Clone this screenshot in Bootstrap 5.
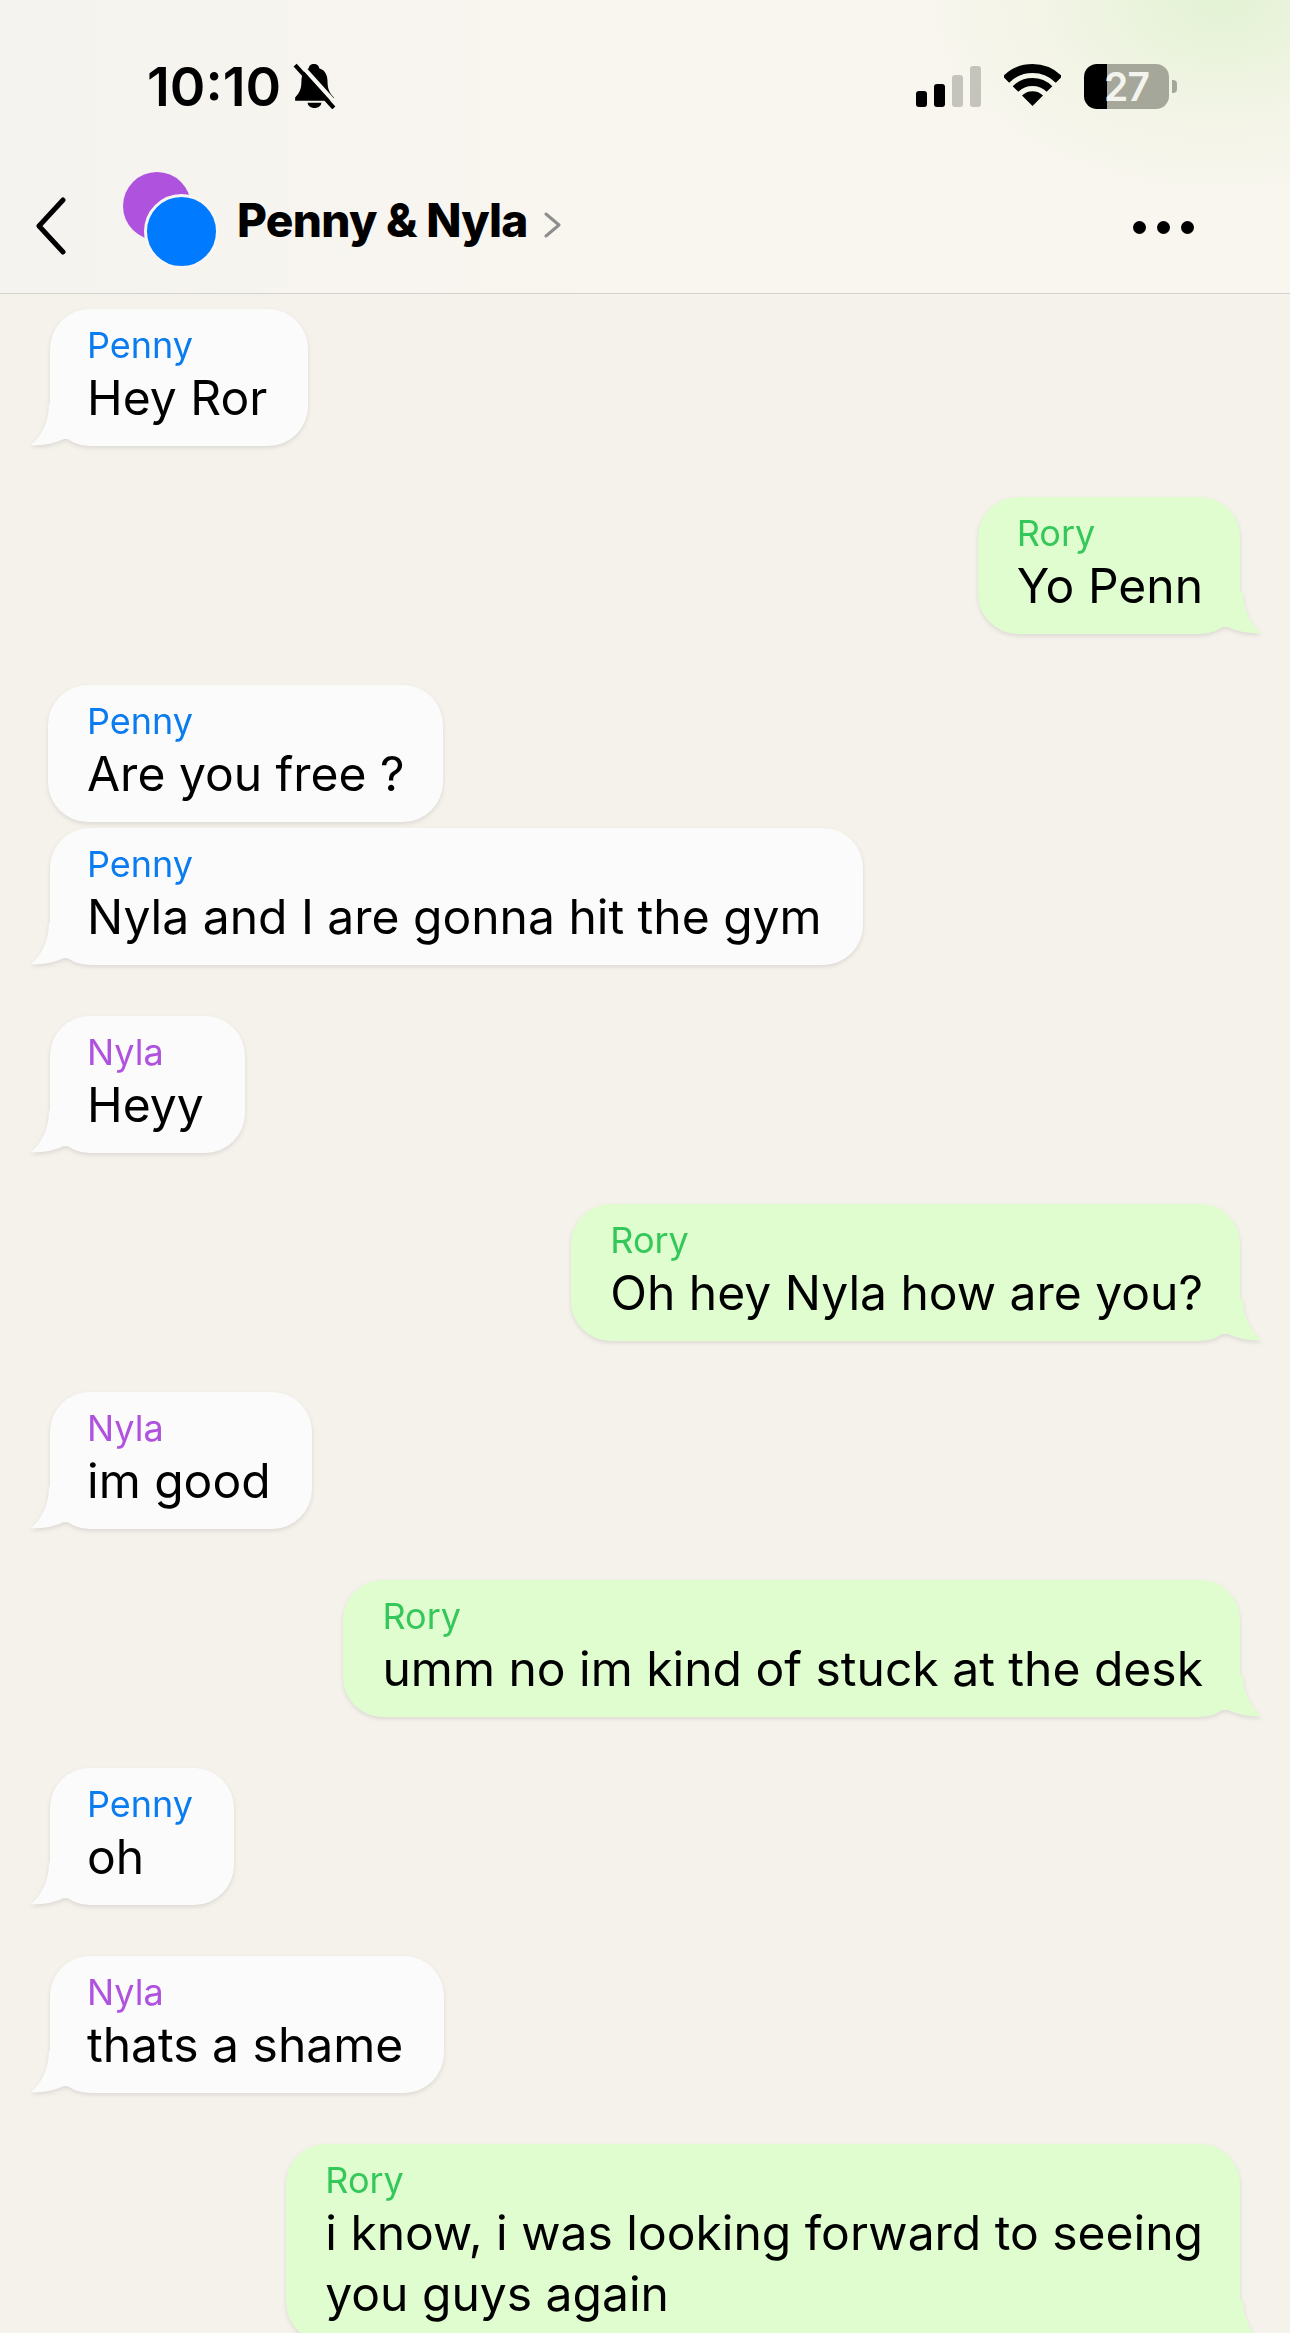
<!DOCTYPE html>
<html lang="en">
<head>
    <meta charset="UTF-8">
    <meta name="viewport" content="width=device-width, initial-scale=1.0">
    <title>Penny &amp; Nyla</title>
    <link href="https://cdn.jsdelivr.net/npm/bootstrap@5.3.0/dist/css/bootstrap.min.css" rel="stylesheet">
    <style>
        html, body { height: 2333px; overflow: hidden; }
        body { background: #f5f2ec; font-family: Inter, "Liberation Sans", sans-serif; color: #000; }

        .top-head {
            height: 294px;
            border-bottom: 1px solid #d4d2cd;
            background:
                radial-gradient(ellipse 320px 210px at 1220px 0, #e3f2d4 0%, rgba(240, 244, 226, .7) 55%, rgba(249, 246, 240, 0) 100%),
                linear-gradient(90deg, #f5f3ef 0%, #f9f6f0 45%);
        }
        .status-row { height: 148px; padding: 64px 113px 0 147px; }
        .clock { font-size: 54px; font-weight: 600; line-height: 46px; width: 146px; }
        .bell-icon { margin-top: -1px; }
        .sig-bar { width: 11px; border-radius: 3px; background: #000; }
        .sig-bar.off { background: #c5c4bc; }
        .sig-wrap { gap: 7px; height: 41px; margin-right: 23px; margin-top: 2px; }
        .wifi-icon { margin-right: 23px; }
        .batt {
            width: 85px; height: 45px; border-radius: 13px;
            background: linear-gradient(90deg, #000 0, #000 23px, #a5a79b 23px);
            color: #f4f4ee; font-size: 39px; font-weight: 600; line-height: 45px; letter-spacing: -1px;
        }
        .batt-nub { width: 5px; height: 13px; border-radius: 0 4px 4px 0; background: #a5a79b; margin-left: 3px; }

        .nav-row { padding: 10px 96px 0 35px; height: 145px; }
        .avatars { width: 94px; height: 96px; margin-left: 56px; margin-top: -11px; margin-right: 20px; position: relative; }
        .av-back { position: absolute; left: 0; top: 0; width: 68px; height: 68px; border-radius: 50%; background: #af52de; }
        .av-front { position: absolute; left: 21px; top: 22px; width: 75px; height: 75px; border-radius: 50%; background: #007aff; border: 3px solid #f8f6f2; }
        .convo-title { font-size: 46px; font-weight: 800; line-height: 54px; letter-spacing: -.7px; margin-top: -12px; }
        .title-chev { margin-top: -2px; }
        .dots { gap: 11px; margin-top: 3px; }
        .dots span { width: 13px; height: 13px; border-radius: 50%; background: #000; }

        .chat { padding: 15px 50px 0; }
        .msg-row { margin-bottom: 51px; }
        .msg-row.tight { margin-bottom: 6px; }
        .bubble {
            position: relative;
            padding: 14px 41px 18px 37px;
            border-radius: 40px;
            background: #fbfbfb;
            filter: drop-shadow(0 2px 2px rgba(0, 0, 0, .1));
        }
        .bubble.mine { background: #e0fdd0; padding-right: 37px; padding-left: 39px; }
        .bubble.no-tail { margin-left: -2px; padding-left: 39px; padding-right: 38px; }
        .who { font-size: 36px; line-height: 44px; }
        .who-penny { color: #0a7cf0; }
        .who-nyla { color: #af52de; }
        .who-rory { color: #34c759; }
        .said { font-size: 48px; line-height: 61px; white-space: nowrap; }
        .tail { position: absolute; bottom: 0; left: -19px; width: 50px; height: 50px; fill: #fbfbfb; }
        .mine .tail { left: auto; right: -21px; transform: scaleX(-1); fill: #e0fdd0; }
    </style>
</head>
<body>
    <header class="top-head">
        <div class="status-row d-flex justify-content-between">
            <div class="d-flex align-items-start">
                <div class="clock">10:10</div>
                <svg width="44" height="46" viewBox="0 0 42 44" class="bell-icon">
                    <path d="M20 1c3 0 5 2 5 4 6 2 8 7 8 13 0 7 2 11 6 15v3H2v-3c4-4 6-8 6-15 0-6 2-11 7-13 0-2 2-4 5-4z"/>
                    <path d="M14 38h13c0 3-3 5-6.500 5S14 41 14 38z"/>
                    <path d="M6 0l36 40" stroke="#f8f6f1" stroke-width="4" fill="none"/>
                    <path d="M2 2l37 41" stroke="#000" stroke-width="4" fill="none"/>
                </svg>
            </div>
            <div class="d-flex align-items-start">
                <div class="sig-wrap d-flex align-items-end">
                    <div class="sig-bar" style="height: 16px"></div>
                    <div class="sig-bar" style="height: 23px"></div>
                    <div class="sig-bar off" style="height: 32px"></div>
                    <div class="sig-bar off" style="height: 41px"></div>
                </div>
                <svg width="57" height="43" viewBox="0 0 57 43" class="wifi-icon flex-shrink-0">
                    <path d="M2 15.500A37.500 37.500 0 0 1 55 15.500" fill="none" stroke="#000" stroke-width="9"/>
                    <path d="M11.500 25A24 24 0 0 1 45.500 25" fill="none" stroke="#000" stroke-width="8"/>
                    <path d="M28.500 42L18 31.500A15 15 0 0 1 39 31.500Z"/>
                </svg>
                <div class="batt text-center">27</div>
                <div class="batt-nub align-self-start mt-3"></div>
            </div>
        </div>
        <div class="nav-row d-flex align-items-center">
            <svg width="32" height="58" viewBox="0 0 32 58">
                <path d="M28 3L4 29l24 26" fill="none" stroke="#000" stroke-width="5" stroke-linecap="round" stroke-linejoin="round"/>
            </svg>
            <div class="avatars">
                <div class="av-back"></div>
                <div class="av-front"></div>
            </div>
            <div class="convo-title">Penny &amp; Nyla</div>
            <svg width="18" height="26" viewBox="0 0 18 26" class="title-chev ms-3">
                <path d="M2 2l13 11L2 24" fill="none" stroke="#8e8e8e" stroke-width="3" stroke-linecap="round" stroke-linejoin="round"/>
            </svg>
            <div class="dots d-flex ms-auto">
                <span></span><span></span><span></span>
            </div>
        </div>
    </header>

    <main class="chat d-flex flex-column">
        <div class="msg-row d-flex justify-content-start">
            <div class="bubble">
                <svg class="tail" viewBox="0 0 50 50"><path d="M18 8C18 26 10 41 0 49C12 50 24 47 33 43L45 43L45 8Z"/></svg>
                <div class="who who-penny">Penny</div>
                <div class="said">Hey Ror</div>
            </div>
        </div>
        <div class="msg-row d-flex justify-content-end">
            <div class="bubble mine">
                <svg class="tail" viewBox="0 0 50 50"><path d="M18 8C18 26 10 41 0 49C12 50 24 47 33 43L45 43L45 8Z"/></svg>
                <div class="who who-rory">Rory</div>
                <div class="said">Yo Penn</div>
            </div>
        </div>
        <div class="msg-row tight d-flex justify-content-start">
            <div class="bubble no-tail">
                <div class="who who-penny">Penny</div>
                <div class="said">Are you free ?</div>
            </div>
        </div>
        <div class="msg-row d-flex justify-content-start">
            <div class="bubble">
                <svg class="tail" viewBox="0 0 50 50"><path d="M18 8C18 26 10 41 0 49C12 50 24 47 33 43L45 43L45 8Z"/></svg>
                <div class="who who-penny">Penny</div>
                <div class="said">Nyla and I are gonna hit the gym</div>
            </div>
        </div>
        <div class="msg-row d-flex justify-content-start">
            <div class="bubble">
                <svg class="tail" viewBox="0 0 50 50"><path d="M18 8C18 26 10 41 0 49C12 50 24 47 33 43L45 43L45 8Z"/></svg>
                <div class="who who-nyla">Nyla</div>
                <div class="said">Heyy</div>
            </div>
        </div>
        <div class="msg-row d-flex justify-content-end">
            <div class="bubble mine">
                <svg class="tail" viewBox="0 0 50 50"><path d="M18 8C18 26 10 41 0 49C12 50 24 47 33 43L45 43L45 8Z"/></svg>
                <div class="who who-rory">Rory</div>
                <div class="said">Oh hey Nyla how are you?</div>
            </div>
        </div>
        <div class="msg-row d-flex justify-content-start">
            <div class="bubble">
                <svg class="tail" viewBox="0 0 50 50"><path d="M18 8C18 26 10 41 0 49C12 50 24 47 33 43L45 43L45 8Z"/></svg>
                <div class="who who-nyla">Nyla</div>
                <div class="said">im good</div>
            </div>
        </div>
        <div class="msg-row d-flex justify-content-end">
            <div class="bubble mine">
                <svg class="tail" viewBox="0 0 50 50"><path d="M18 8C18 26 10 41 0 49C12 50 24 47 33 43L45 43L45 8Z"/></svg>
                <div class="who who-rory">Rory</div>
                <div class="said">umm no im kind of stuck at the desk</div>
            </div>
        </div>
        <div class="msg-row d-flex justify-content-start">
            <div class="bubble">
                <svg class="tail" viewBox="0 0 50 50"><path d="M18 8C18 26 10 41 0 49C12 50 24 47 33 43L45 43L45 8Z"/></svg>
                <div class="who who-penny">Penny</div>
                <div class="said">oh</div>
            </div>
        </div>
        <div class="msg-row d-flex justify-content-start">
            <div class="bubble">
                <svg class="tail" viewBox="0 0 50 50"><path d="M18 8C18 26 10 41 0 49C12 50 24 47 33 43L45 43L45 8Z"/></svg>
                <div class="who who-nyla">Nyla</div>
                <div class="said">thats a shame</div>
            </div>
        </div>
        <div class="msg-row d-flex justify-content-end">
            <div class="bubble mine">
                <svg class="tail" viewBox="0 0 50 50"><path d="M18 8C18 26 10 41 0 49C12 50 24 47 33 43L45 43L45 8Z"/></svg>
                <div class="who who-rory">Rory</div>
                <div class="said">i know, i was looking forward to seeing<br>you guys again</div>
            </div>
        </div>
    </main>

    <script src="https://cdn.jsdelivr.net/npm/bootstrap@5.3.0/dist/js/bootstrap.bundle.min.js"></script>
</body>
</html>
